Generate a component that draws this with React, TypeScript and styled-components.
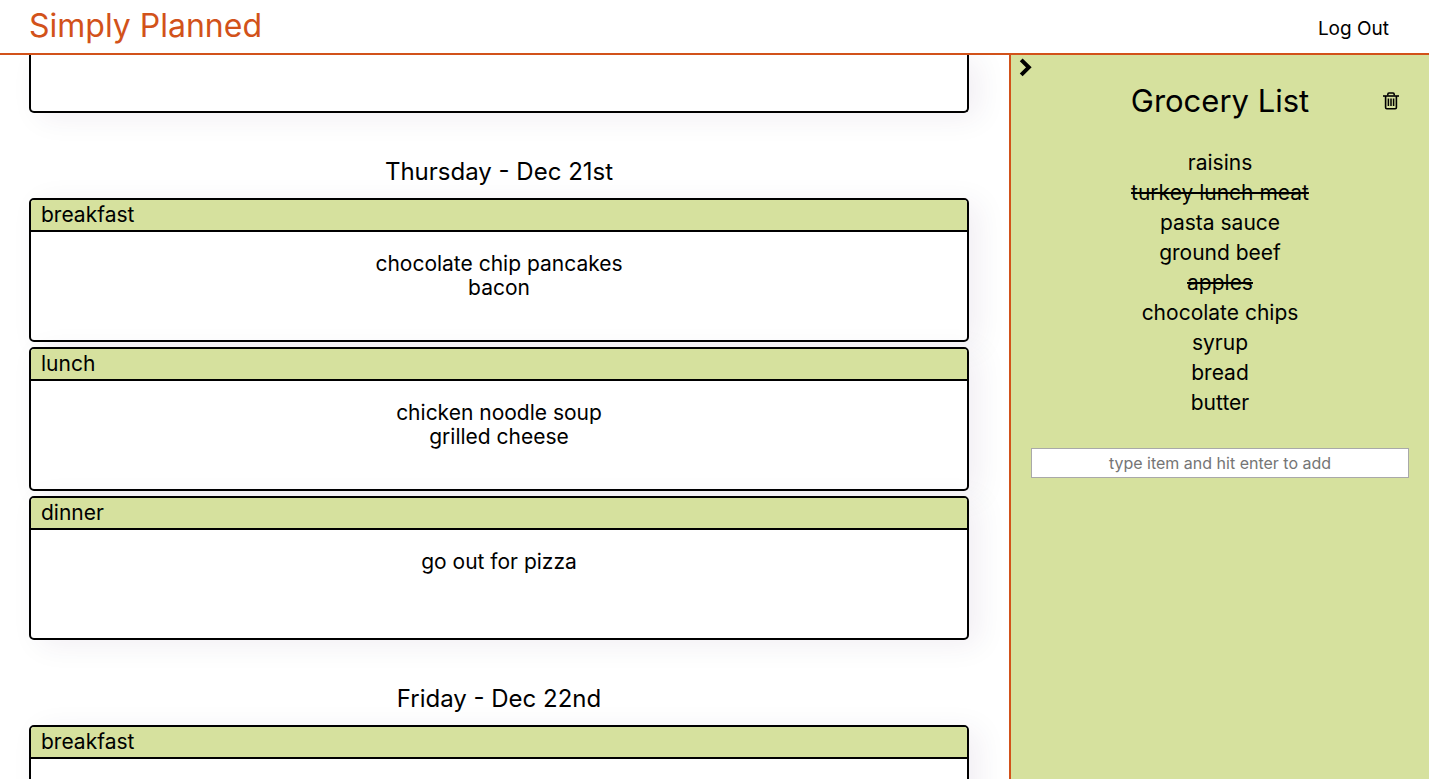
import React from 'react';
import styled, { createGlobalStyle } from 'styled-components';

const colors = { orange: '#d2521a', green: '#d6e19e', ink: '#000000' };

const GlobalStyle = createGlobalStyle`
  * { box-sizing: border-box; }
  body {
    margin: 0;
    font-family: Inter, 'Open Sans', sans-serif;
    font-size: 21px;
    line-height: 24px;
    color: ${colors.ink};
    background: #ffffff;
  }
  h1, h2, h3, p, ul { margin: 0; padding: 0; font-weight: 400; }
  button { border: 0; padding: 0; background: none; color: inherit; font: inherit; cursor: pointer; }
`;

const Page = styled.div`
  display: flex;
  flex-direction: column;
  height: 100vh;
`;

const Header = styled.header`
  display: flex;
  align-items: center;
  justify-content: space-between;
  flex: none;
  height: 55px;
  padding: 0 40px 2px 29px;
  border-bottom: 2px solid ${colors.orange};
`;

const Brand = styled.h1`
  font-size: 32px;
  line-height: 40px;
  color: ${colors.orange};
`;

const LogOut = styled.button`
  padding-top: 6px;
  font-size: 19px;
  line-height: 24px;
`;

const Columns = styled.div`
  display: flex;
  flex: 1;
  min-height: 0;
`;

const Planner = styled.main`
  flex: 1;
  min-width: 0;
  padding: 0 40px 0 29px;
  overflow: hidden;
`;

const Day = styled.section`
  margin-bottom: 40px;
`;

const DayTitle = styled.h2`
  padding: 4px 0 11px;
  font-size: 24px;
  line-height: 30px;
  text-align: center;
`;

const MealCard = styled.article<{ $continued?: boolean }>`
  overflow: hidden;
  margin-bottom: 5px;
  border: 2px solid ${colors.ink};
  border-top-width: ${(p) => (p.$continued ? '0' : '2px')};
  border-radius: ${(p) => (p.$continued ? '0 0 5px 5px' : '5px')};
  box-shadow: 10px 5px 30px rgba(60, 20, 90, 0.07);
`;

const MealName = styled.h3`
  height: 32px;
  padding: 0 10px;
  border-bottom: 2px solid ${colors.ink};
  background: ${colors.green};
  font-size: 21px;
  line-height: 30px;
`;

const MealBody = styled.div<{ $continued?: boolean }>`
  min-height: ${(p) => (p.$continued ? '56px' : '108px')};
  padding: 20px;
  text-align: center;
`;

const Sidebar = styled.aside`
  flex: none;
  width: 420px;
  padding: 0 20px;
  border-left: 2px solid ${colors.orange};
  background: ${colors.green};
`;

const Collapse = styled.button`
  display: block;
  height: 24px;
  margin-left: -12px;
`;

const SidebarHead = styled.div`
  display: grid;
  grid-template-columns: 16px 1fr 16px;
  align-items: center;
  height: 44px;
  padding: 0 10px;
`;

const ListTitle = styled.h2`
  grid-column: 2;
  font-size: 31px;
  line-height: 40px;
  text-align: center;
`;

const Clear = styled.button`
  display: flex;
`;

const Groceries = styled.ul`
  padding: 25px 0 30px;
  list-style: none;
  text-align: center;
`;

const Grocery = styled.li<{ $done?: boolean }>`
  line-height: 30px;
  text-decoration: ${(p) => (p.$done ? 'line-through 2px' : 'none')};
`;

const AddItem = styled.input`
  display: block;
  width: 100%;
  height: 30px;
  border: 1px solid #a9a9a9;
  background: #ffffff;
  font-family: Inter, sans-serif;
  font-size: 16px;
  text-align: center;
  &::placeholder { color: #757575; opacity: 1; }
`;

const ChevronIcon = () => (
  <svg width="14" height="24" viewBox="0 0 14 24" fill="none" aria-hidden="true" display="block">
    <path d="M2.2 4.8 9.8 12.3 2.2 19.8" stroke="#000" strokeWidth="4" />
  </svg>
);

const TrashIcon = () => (
  <svg width="16" height="18" viewBox="0 0 16 18" fill="none" stroke="#000" aria-hidden="true">
    <path d="M0 4h16" strokeWidth="1.6" />
    <path d="M4.8 3.6V2.4Q4.8 1 6 1h4q1.2 0 1.2 1.4v1.2" strokeWidth="1.6" />
    <path d="M2.6 4v11.6q0 1.2 1.2 1.2h8.4q1.2 0 1.2-1.2V4" strokeWidth="1.6" />
    <path d="M5.4 6.6v7.4M8 6.6v7.4M10.6 6.6v7.4" strokeWidth="1.5" />
  </svg>
);

type Meal = { name: string; dishes: string[] };

const days: { title: string; meals: Meal[] }[] = [
  {
    title: 'Thursday - Dec 21st',
    meals: [
      { name: 'breakfast', dishes: ['chocolate chip pancakes', 'bacon'] },
      { name: 'lunch', dishes: ['chicken noodle soup', 'grilled cheese'] },
      { name: 'dinner', dishes: ['go out for pizza'] },
    ],
  },
  { title: 'Friday - Dec 22nd', meals: [{ name: 'breakfast', dishes: [] }] },
];

const groceries = [
  { name: 'raisins' },
  { name: 'turkey lunch meat', done: true },
  { name: 'pasta sauce' },
  { name: 'ground beef' },
  { name: 'apples', done: true },
  { name: 'chocolate chips' },
  { name: 'syrup' },
  { name: 'bread' },
  { name: 'butter' },
];

export default function App() {
  return (
    <Page>
      <GlobalStyle />
      <Header>
        <Brand>Simply Planned</Brand>
        <LogOut type="button">Log Out</LogOut>
      </Header>
      <Columns>
        <Planner>
          <Day>
            <MealCard $continued>
              <MealBody $continued />
            </MealCard>
          </Day>
          {days.map((day) => (
            <Day key={day.title}>
              <DayTitle>{day.title}</DayTitle>
              {day.meals.map((meal) => (
                <MealCard key={meal.name}>
                  <MealName>{meal.name}</MealName>
                  <MealBody>
                    {meal.dishes.map((dish) => (
                      <p key={dish}>{dish}</p>
                    ))}
                  </MealBody>
                </MealCard>
              ))}
            </Day>
          ))}
        </Planner>
        <Sidebar>
          <Collapse type="button" aria-label="Collapse grocery list">
            <ChevronIcon />
          </Collapse>
          <SidebarHead>
            <ListTitle>Grocery List</ListTitle>
            <Clear type="button" aria-label="Clear grocery list">
              <TrashIcon />
            </Clear>
          </SidebarHead>
          <Groceries>
            {groceries.map((item) => (
              <Grocery key={item.name} $done={item.done}>
                {item.name}
              </Grocery>
            ))}
          </Groceries>
          <AddItem type="text" aria-label="Add grocery item" placeholder="type item and hit enter to add" />
        </Sidebar>
      </Columns>
    </Page>
  );
}
